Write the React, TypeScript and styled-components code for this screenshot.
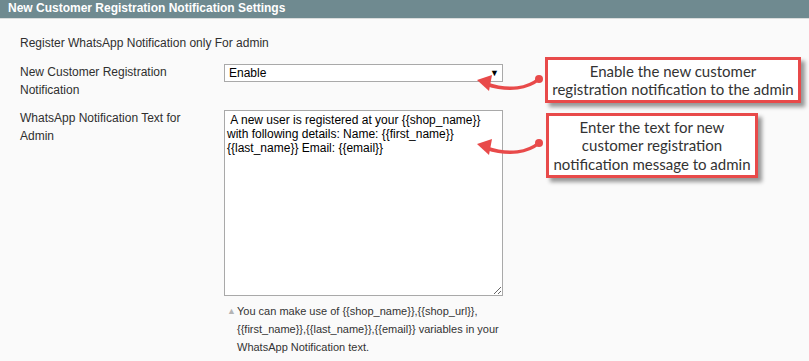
import styled, { createGlobalStyle } from "styled-components";

const GlobalStyle = createGlobalStyle`
  html, body {
    margin: 0;
    padding: 0;
    background: #fafafa;
  }
  body {
    font-family: Arial, "Liberation Sans", sans-serif;
    font-size: 12px;
    color: #2f2f2f;
  }
`;

const Page = styled.div`
  position: relative;
  width: 809px;
  height: 361px;
  overflow: hidden;
  background: #fafafa;
`;

const Header = styled.div`
  height: 18px;
  line-height: 17px;
  padding-left: 8px;
  background: #6f8a90;
  border-bottom: 1px solid #d9dcdc;
  color: #fff;
  font-weight: bold;
  font-size: 12px;
`;

const Body = styled.div`
  padding: 15px 0 0 20px;
  display: flex;
  flex-direction: column;
`;

const Intro = styled.div`
  line-height: 18px;
  margin-bottom: 11px;
`;

const Row = styled.div`
  display: grid;
  grid-template-columns: 204px 279px;
  margin-bottom: 10px;
`;

const Label = styled.label`
  line-height: 18px;
  padding-right: 20px;
`;

const Field = styled.div`
  padding-top: 1px;
  display: flex;
  flex-direction: column;
`;

const SelectBox = styled.div`
  box-sizing: border-box;
  height: 18px;
  border: 1px solid #a9a9a9;
  background: #fff;
  display: flex;
  align-items: center;
  justify-content: space-between;
  padding: 0 3px 0 4px;
  color: #000;
  font-size: 12px;
`;

const Caret = styled.span`
  font-size: 9px;
  color: #000;
`;

const TextArea = styled.textarea`
  box-sizing: border-box;
  width: 279px;
  height: 186px;
  margin: 0;
  border: 1px solid #a9a9a9;
  background: #fff;
  padding: 2px 2px;
  font-family: Arial, "Liberation Sans", sans-serif;
  font-size: 12px;
  line-height: 14px;
  color: #000;
  resize: both;
  outline: none;
`;

const Note = styled.div`
  display: flex;
  margin-top: 6px;
  padding-left: 3px;
  font-size: 11px;
  line-height: 18px;
  color: #333;
`;

const NoteMark = styled.span`
  flex: 0 0 10px;
  font-size: 9px;
  color: #b4b4b4;
  line-height: 18px;
`;

const NoteText = styled.span`
  flex: 1;
`;

const Callout = styled.div<{ $top: number; $left: number; $width: number; $height: number }>`
  position: absolute;
  top: ${(p) => p.$top}px;
  left: ${(p) => p.$left}px;
  width: ${(p) => p.$width}px;
  height: ${(p) => p.$height}px;
  box-sizing: border-box;
  border: 3px solid #e84a4a;
  background: #fff;
  box-shadow: 4px 4px 4px rgba(0, 0, 0, 0.4);
  display: flex;
  align-items: center;
  justify-content: center;
  text-align: center;
  font-family: Lato, "Open Sans", sans-serif;
  font-size: 15px;
  line-height: 18.5px;
  color: #333;
`;

const Overlay = styled.svg`
  position: absolute;
  top: 0;
  left: 0;
  pointer-events: none;
`;

function Arrow({ y }: { y: number }) {
  return (
    <g transform={`translate(0 ${y})`} fill="#e84a4a" stroke="#e84a4a">
      <path d="M539 79 C 528 88, 510 92, 486 84" fill="none" strokeWidth="3.5" strokeLinecap="round" />
      <circle cx="539" cy="79" r="4" stroke="none" />
      <polygon points="477,80 492,75 489,91" stroke="none" />
    </g>
  );
}

export default function App() {
  return (
    <Page>
      <GlobalStyle />
      <Header>New Customer Registration Notification Settings</Header>
      <Body>
        <Intro>Register WhatsApp Notification only For admin</Intro>
        <Row>
          <Label>New Customer Registration Notification</Label>
          <Field>
            <SelectBox>
              <span>Enable</span>
              <Caret>▼</Caret>
            </SelectBox>
          </Field>
        </Row>
        <Row>
          <Label>WhatsApp Notification Text for Admin</Label>
          <Field>
            <TextArea
              readOnly
              defaultValue=" A new user is registered at your {{shop_name}} with following details: Name: {{first_name}} {{last_name}} Email: {{email}}"
            />
            <Note>
              <NoteMark>▲</NoteMark>
              <NoteText>
                {"You can make use of {{shop_name}},{{shop_url}}, {{first_name}},{{last_name}},{{email}} variables in your WhatsApp Notification text."}
              </NoteText>
            </Note>
          </Field>
        </Row>
      </Body>

      <Overlay width="809" height="361">
        <Arrow y={0} />
        <Arrow y={64} />
      </Overlay>

      <Callout $top={57} $left={545} $width={256} $height={46}>
        Enable the new customer
        <br />
        registration notification to the admin
      </Callout>
      <Callout $top={113} $left={546} $width={212} $height={65}>
        Enter the text for new
        <br />
        customer registration
        <br />
        notification message to admin
      </Callout>
    </Page>
  );
}
